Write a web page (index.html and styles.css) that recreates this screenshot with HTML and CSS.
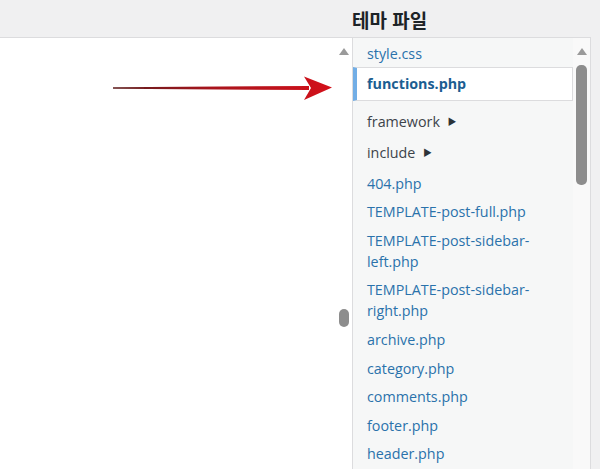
FILE: index.html
```html
<!DOCTYPE html>
<html lang="ko">
<head>
<meta charset="utf-8">
<title>테마 파일</title>
<link rel="stylesheet" href="styles.css">
</head>
<body>
<div class="page">
  <header class="top">
    <h2 class="title">테마 파일</h2>
  </header>
  <div class="main">
    <div class="editor">
      <div class="editor-content"></div>
      <div class="vscroll editor-scroll">
        <div class="arrow-box"><span class="arrow-up"></span></div>
        <div class="track"><span class="thumb"></span></div>
      </div>
      <svg class="annot" width="352" height="90" viewBox="0 0 352 90" aria-hidden="true">
        <defs>
          <linearGradient id="redg" x1="113" y1="0" x2="332" y2="0" gradientUnits="userSpaceOnUse">
            <stop offset="0" stop-color="#5e1e1e"/>
            <stop offset="0.45" stop-color="#a8141c"/>
            <stop offset="1" stop-color="#d3101a"/>
          </linearGradient>
        </defs>
        <polygon points="113,49.3 309,48 309,52 113,50.7" fill="url(#redg)"/>
        <polygon points="304,38.5 332,49.5 304,62 311,50" fill="url(#redg)"/>
      </svg>
    </div>
    <aside class="sidebar">
      <ul class="files">
        <li class="file"><a class="link" href="#">style.css</a></li>
        <li class="file selected"><a class="link" href="#">functions.php</a></li>
        <li class="file folder">framework <span class="caret">&#9654;</span></li>
        <li class="file folder">include <span class="caret">&#9654;</span></li>
        <li class="file"><a class="link" href="#">404.php</a></li>
        <li class="file"><a class="link" href="#">TEMPLATE-post-full.php</a></li>
        <li class="file"><a class="link" href="#">TEMPLATE-post-sidebar-left.php</a></li>
        <li class="file"><a class="link" href="#">TEMPLATE-post-sidebar-right.php</a></li>
        <li class="file"><a class="link" href="#">archive.php</a></li>
        <li class="file"><a class="link" href="#">category.php</a></li>
        <li class="file"><a class="link" href="#">comments.php</a></li>
        <li class="file"><a class="link" href="#">footer.php</a></li>
        <li class="file"><a class="link" href="#">header.php</a></li>
      </ul>
      <div class="vscroll side-scroll">
        <div class="arrow-box"><span class="arrow-up"></span></div>
        <div class="track"><span class="thumb"></span></div>
      </div>
    </aside>
  </div>
</div>
</body>
</html>
```

FILE: styles.css
```css
html, body {
  margin: 0;
  padding: 0;
}
body {
  background: #f0f0f1;
  font-family: "Open Sans", "Noto Sans", "Noto Sans CJK KR", sans-serif;
  color: #3c434a;
  width: 600px;
  height: 469px;
  overflow: hidden;
}
.page {
  display: flex;
  flex-direction: column;
  height: 469px;
}
.top {
  height: 37px;
  display: flex;
  align-items: center;
  padding-left: 352px;
  padding-top: 2px;
  box-sizing: border-box;
}
.title {
  margin: 0;
  font-family: "Noto Sans CJK KR", "Noto Sans", sans-serif;
  font-size: 19px;
  font-weight: 700;
  color: #1d2327;
  line-height: 24px;
}
.main {
  display: flex;
  flex: 1;
  min-height: 0;
}
.editor {
  position: relative;
  width: 352px;
  background: #fff;
  border-top: 1px solid #dcdcde;
  display: flex;
  box-sizing: border-box;
}
.editor-content {
  flex: 1;
}
.vscroll {
  width: 16px;
  display: flex;
  flex-direction: column;
  align-items: center;
}
.arrow-box {
  height: 27px;
  width: 100%;
  display: flex;
  align-items: center;
  justify-content: center;
}
.arrow-up {
  width: 0;
  height: 0;
  border-left: 5px solid transparent;
  border-right: 5px solid transparent;
  border-bottom: 7px solid #9a9a9a;
}
.track {
  width: 100%;
  display: flex;
  justify-content: center;
}
.thumb {
  display: block;
  background: #8d8d8d;
  border-radius: 5px;
}
.editor-scroll .arrow-box {
  margin-right: 1px;
}
.editor-scroll .track {
  padding-top: 244px;
}
.editor-scroll .thumb {
  width: 10px;
  height: 18px;
}
.sidebar {
  width: 239px;
  background: #f6f7f7;
  border: 1px solid #dcdcde;
  border-bottom: 0;
  display: flex;
  box-sizing: border-box;
}
.files {
  list-style: none;
  margin: 0;
  padding: 1px 0 0;
  width: 220px;
  font-size: 14.3px;
  line-height: 21px;
}
.file {
  padding: 3.8px 14px 3.8px 14px;
}
.link {
  color: #2a72ab;
  text-decoration: none;
}
.selected {
  background: #fff;
  border: 1px solid #dcdcde;
  border-left: 4px solid #72aee6;
  padding: 5.5px 14px 5.5px 10px;
  margin-top: -1px;
  margin-bottom: 5px;
}
.selected .link {
  color: #1b5d91;
  font-weight: 700;
}
.folder {
  color: #3c434a;
  padding-top: 5.3px;
  padding-bottom: 5.3px;
}
.caret {
  font-size: 9px;
  margin-left: 4px;
  vertical-align: 2px;
  color: #2c3338;
}
.side-scroll {
  width: 17px;
  background: #f9f9f9;
}
.side-scroll .thumb {
  width: 11px;
  height: 120px;
  margin-right: 1px;
}
.annot {
  position: absolute;
  left: 0;
  top: 0;
}
```
